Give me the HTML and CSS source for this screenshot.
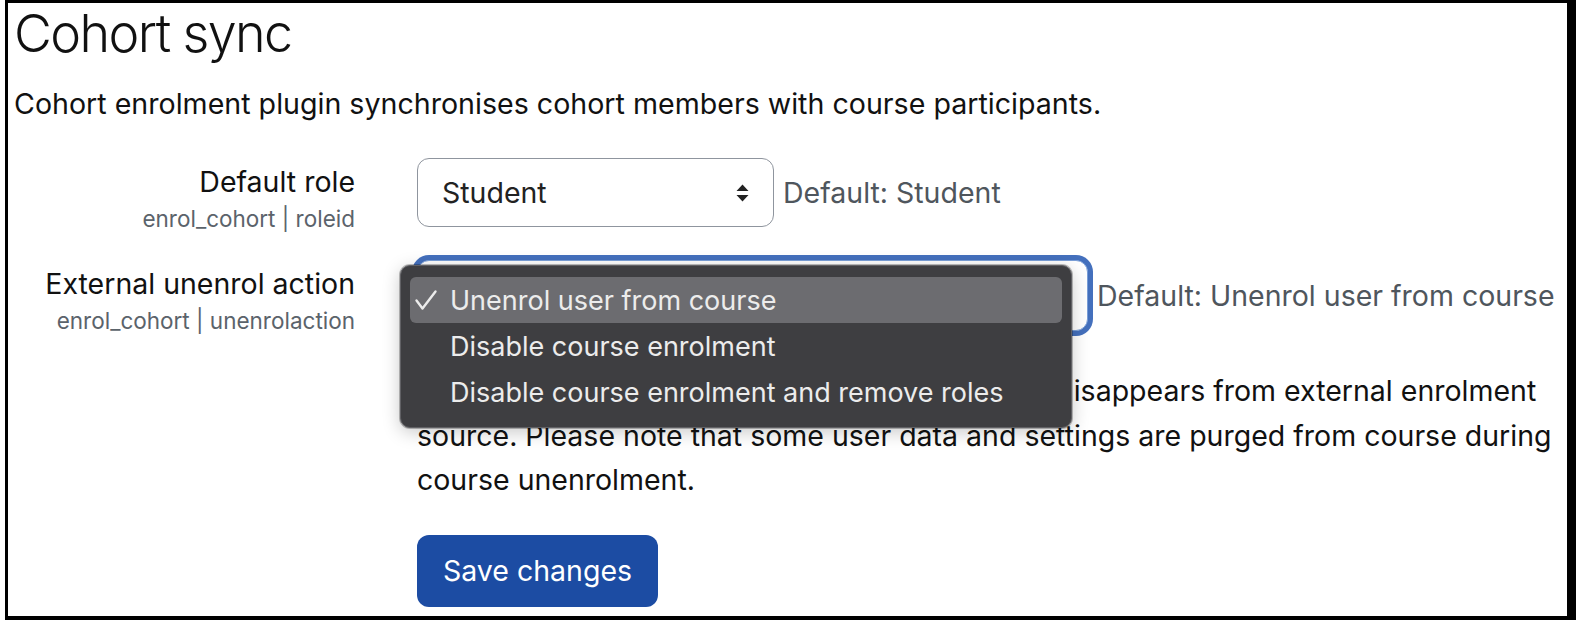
FILE: index.html
```html
<!DOCTYPE html>
<html lang="en">
<head>
<meta charset="utf-8">
<title>Cohort sync</title>
<link rel="stylesheet" href="styles.css">
</head>
<body>
<div class="frame">
  <h2 class="title">Cohort sync</h2>
  <p class="intro">Cohort enrolment plugin synchronises cohort members with course participants.</p>

  <div class="setting first">
    <div class="label-col">
      <div class="label">Default role</div>
      <div class="key">enrol_cohort | roleid</div>
    </div>
    <div class="field-col">
      <div class="field-row">
        <div class="select role">
          <span class="select-value">Student</span>
          <svg class="arrows" width="13" height="18" viewBox="0 0 13 18"><path d="M0.5 7 L6.5 0.5 L12.5 7 Z M0.5 11 L6.5 17.5 L12.5 11 Z" fill="#222"/></svg>
        </div>
        <span class="default">Default: Student</span>
      </div>
    </div>
  </div>

  <div class="setting second">
    <div class="label-col">
      <div class="label">External unenrol action</div>
      <div class="key">enrol_cohort | unenrolaction</div>
    </div>
    <div class="field-col">
      <div class="field-row">
        <div class="select-wrap">
          <div class="select action focused">
            <span class="select-value">Unenrol user from course</span>
          </div>
          <ul class="menu">
            <li class="menu-item selected"><span class="check"><svg width="24" height="22" viewBox="0 0 24 22"><path d="M2.5 11.5 L8.5 19.5 L21.5 2.5" fill="none" stroke="#ececec" stroke-width="2.4" stroke-linecap="round" stroke-linejoin="round"/></svg></span>Unenrol user from course</li>
            <li class="menu-item"><span class="check"></span>Disable course enrolment</li>
            <li class="menu-item"><span class="check"></span>Disable course enrolment and remove roles</li>
          </ul>
        </div>
        <span class="default">Default: Unenrol user from course</span>
      </div>
      <p class="desc">Select action to carry out when user enrolment disappears from external enrolment source. Please note that some user data and settings are purged from course during course unenrolment.</p>
      <button class="save" type="button">Save changes</button>
    </div>
  </div>
</div>
</body>
</html>
```

FILE: styles.css
```css
* { box-sizing: border-box; }

html, body {
  margin: 0;
  padding: 0;
  background: #fff;
}

body {
  font-family: Inter, "Noto Sans", sans-serif;
  color: #1d2125;
}

.frame {
  margin-left: 5px;
  width: 1571px;
  height: 620px;
  border-style: solid;
  border-color: #000;
  border-width: 3px 9px 4px 3px;
  padding: 0 0 0 6px;
  overflow: hidden;
  background: #fff;
}

.title {
  margin: 0;
  font-size: 52px;
  line-height: 62px;
  font-weight: 300;
  color: #111;
  letter-spacing: -1.6px;
}

.intro {
  margin: 19px 0 0;
  font-size: 28.6px;
  line-height: 40px;
  color: #111;
}

.setting {
  display: grid;
  grid-template-columns: 341px 1fr;
  column-gap: 62px;
}

.setting.first {
  margin-top: 34px;
}

.setting.second {
  margin-top: 26px;
}

.label-col {
  text-align: right;
}

.label {
  padding-top: 5px;
  font-size: 28.5px;
  line-height: 38px;
  color: #111;
}

.key {
  margin-top: 3px;
  font-size: 22.5px;
  line-height: 30px;
  color: #5b636b;
}

.field-row {
  display: flex;
  align-items: center;
}

.select {
  display: flex;
  align-items: center;
  justify-content: space-between;
  height: 69px;
  padding: 0 24px 0 24px;
  border: 1.5px solid #8f959e;
  border-radius: 12px;
  font-size: 28.5px;
  color: #222;
  background: #fff;
}

.select.role {
  width: 357px;
}

.select.action {
  width: 671px;
  height: 71px;
}

.select.focused {
  border-color: #7a9fd8;
  box-shadow: 0 0 0 5px #4470bd;
}

.arrows {
  display: block;
}

.default {
  margin-left: 9px;
  font-size: 28.5px;
  color: #4f565d;
}

.select-wrap {
  position: relative;
}

.menu {
  position: absolute;
  left: -17px;
  top: 5px;
  width: 672px;
  margin: 0;
  padding: 11px 9px 12px;
  list-style: none;
  background: #3e3e41;
  border: 1px solid #616165;
  border-radius: 10px;
  box-shadow: 0 4px 18px rgba(0, 0, 0, 0.22), 0 0 0 1px rgba(0, 0, 0, 0.25);
  z-index: 5;
}

.menu-item {
  display: flex;
  align-items: center;
  height: 46px;
  padding: 0 0 0 4px;
  border-radius: 6px;
  font-size: 27px;
  color: #ececec;
}

.menu-item.selected {
  background: #6c6c70;
}

.check {
  display: flex;
  align-items: center;
  flex: 0 0 36px;
  height: 22px;
}

.check svg {
  display: block;
}

.desc {
  margin: 38px 0 0;
  font-size: 28.5px;
  line-height: 44.5px;
  color: #111;
}

.save {
  display: block;
  margin-top: 32px;
  height: 72px;
  padding: 0 26px;
  border: none;
  border-radius: 12px;
  background: #1c4ca3;
  color: #fff;
  font-family: Inter, "Noto Sans", sans-serif;
  font-size: 28.5px;
}
```
